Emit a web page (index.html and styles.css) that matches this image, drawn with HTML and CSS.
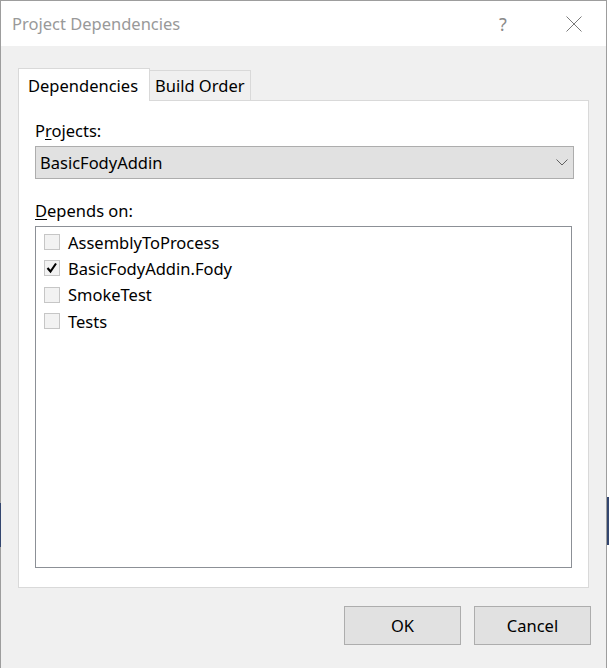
FILE: index.html
```html
<!DOCTYPE html>
<html lang="en">
<head>
<meta charset="utf-8">
<title>Project Dependencies</title>
<link rel="stylesheet" href="styles.css">
</head>
<body>
<div class="desk desk-left"></div>
<div class="desk desk-right"></div>
<div class="window">
  <div class="titlebar">
    <span class="title">Project Dependencies</span>
    <span class="help">?</span>
    <svg class="close" width="16" height="16" viewBox="0 0 16 16" aria-hidden="true">
      <path d="M0.5 0.5 L15.5 15.5 M15.5 0.5 L0.5 15.5" stroke="#7a7a7a" stroke-width="1" fill="none"/>
    </svg>
  </div>
  <div class="client">
    <div class="tabs">
      <div class="tab tab-active">Dependencies</div>
      <div class="tab tab-idle">Build Order</div>
    </div>
    <div class="panel">
      <div class="label">P<u>r</u>ojects:</div>
      <div class="combo">
        <span class="combo-text">BasicFodyAddin</span>
        <svg class="chevron" width="12" height="7" viewBox="0 0 12 7" aria-hidden="true">
          <polyline points="0.5,0.5 6,6 11.5,0.5" stroke="#606060" stroke-width="1" fill="none"/>
        </svg>
      </div>
      <div class="label label-second"><u>D</u>epends on:</div>
      <div class="list">
        <div class="item"><span class="cb"></span><span>AssemblyToProcess</span></div>
        <div class="item"><span class="cb">
          <svg width="14" height="14" viewBox="0 0 14 14" aria-hidden="true">
            <path d="M2.5 7 L5.5 10.5 L11 2.5" stroke="#000" stroke-width="2.1" fill="none" stroke-linejoin="miter"/>
          </svg></span><span>BasicFodyAddin.Fody</span></div>
        <div class="item"><span class="cb"></span><span>SmokeTest</span></div>
        <div class="item"><span class="cb"></span><span>Tests</span></div>
      </div>
    </div>
    <div class="buttons">
      <button class="btn">OK</button>
      <button class="btn">Cancel</button>
    </div>
  </div>
</div>
</body>
</html>
```

FILE: styles.css
```css
* { box-sizing: border-box; }
html, body {
  margin: 0;
  padding: 0;
  background: #ffffff;
}
body {
  position: relative;
  width: 609px;
  height: 668px;
  overflow: hidden;
  font-family: "Noto Sans", "Open Sans", sans-serif;
  font-size: 16.5px;
  color: #000;
}
.desk {
  position: absolute;
  background: #33466f;
  z-index: 5;
}
.desk-left { left: 0; top: 503px; width: 1px; height: 44px; }
.desk-right { left: 607px; top: 497px; width: 2px; height: 48px; }

.window {
  width: 607px;
  height: 668px;
  border: 1px solid #9d9d9d;
  border-bottom: none;
  background: #f0f0f0;
  display: flex;
  flex-direction: column;
}
.titlebar {
  height: 45px;
  flex: none;
  background: #fff;
  display: flex;
  align-items: center;
  padding-left: 11px;
}
.title {
  flex: 1;
  color: #999999;
}
.help {
  width: 20px;
  text-align: center;
  color: #8a8a8a;
  font-size: 18px;
  margin-right: 53px;
}
.close {
  display: block;
  margin-right: 24px;
}
.client {
  flex: 1;
  padding: 22px 15px 0 17px;
}
.tabs {
  display: flex;
  align-items: flex-end;
  height: 32px;
}
.tab {
  display: flex;
  align-items: center;
  border: 1px solid #d9d9d9;
  border-bottom: none;
}
.tab-active {
  position: relative;
  z-index: 1;
  width: 132px;
  height: 33px;
  margin-bottom: -1px;
  padding-left: 9px;
  background: #fff;
}
.tab-idle {
  width: 101px;
  height: 30px;
  border-left: none;
  padding-left: 5px;
  background: #f0f0f0;
}
.panel {
  width: 571px;
  height: 488px;
  border: 1px solid #d9d9d9;
  background: #fff;
  padding: 20px 0 0 16px;
}
.label {
  height: 20px;
  line-height: 20px;
  margin-bottom: 5px;
}
.label u { text-underline-offset: 2px; }
.label-second { margin-top: 22px; }
.combo {
  width: 539px;
  height: 33px;
  border: 1px solid #adadad;
  background: #e1e1e1;
  display: flex;
  align-items: center;
  padding: 0 5px 0 4px;
}
.combo-text { flex: 1; }
.chevron { display: block; }
.list {
  width: 537px;
  height: 342px;
  border: 1px solid #8c9096;
  padding: 2px 0 0 8px;
}
.item {
  height: 26.33px;
  display: flex;
  align-items: center;
  gap: 8px;
}
.cb {
  width: 16px;
  height: 16px;
  flex: none;
  border: 1px solid #c6c6c6;
  background: #f2f2f2;
  display: flex;
  align-items: center;
  justify-content: center;
}
.cb svg { display: block; }
.buttons {
  margin-top: 18px;
  display: flex;
  justify-content: flex-end;
  gap: 13px;
}
.btn {
  width: 117px;
  height: 39px;
  border: 1px solid #adadad;
  background: #e1e1e1;
  font-family: inherit;
  font-size: 16.5px;
  color: #000;
  padding: 0;
}
```
